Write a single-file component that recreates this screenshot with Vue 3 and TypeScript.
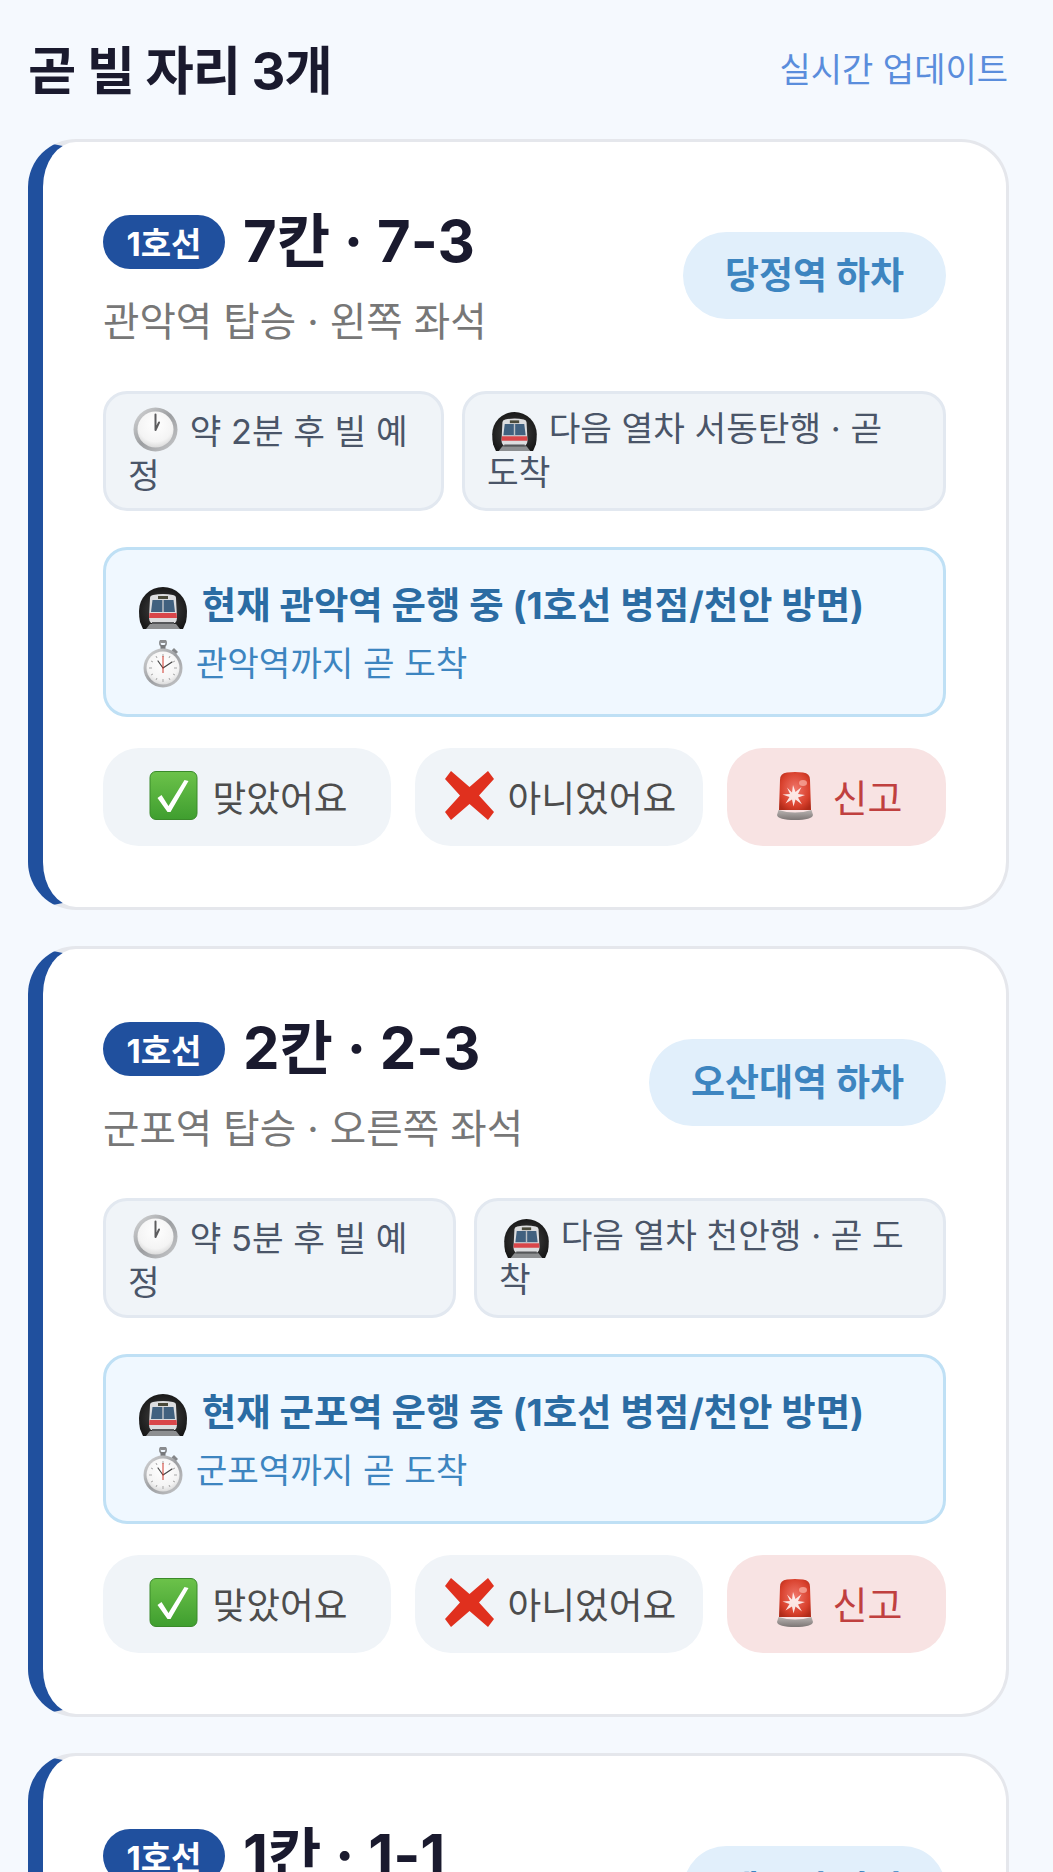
<script setup lang="ts">
interface Seat {
  car: string
  station: string
  side: string
  off: string
  wait: string
  next: string
  chipBasis: [number, number]
}

const seats: Seat[] = [
  { car: '7칸 · 7-3', station: '관악역', side: '왼쪽', off: '당정역 하차', wait: '약 2분 후 빌 예정', next: '다음 열차 서동탄행 · 곧 도착', chipBasis: [341, 484] },
  { car: '2칸 · 2-3', station: '군포역', side: '오른쪽', off: '오산대역 하차', wait: '약 5분 후 빌 예정', next: '다음 열차 천안행 · 곧 도착', chipBasis: [353, 472] },
  { car: '1칸 · 1-1', station: '금정역', side: '왼쪽', off: '세류역 하차', wait: '약 7분 후 빌 예정', next: '다음 열차 병점행 · 곧 도착', chipBasis: [353, 472] },
]
</script>

<template>
  <main class="page">
    <svg class="defs" width="0" height="0" aria-hidden="true">
      <defs>
        <linearGradient id="g-ring" x1="0" y1="0" x2="1" y2="1">
          <stop offset="0" stop-color="#d9dadb" />
          <stop offset=".5" stop-color="#9c9ea1" />
          <stop offset="1" stop-color="#c9cacc" />
        </linearGradient>
        <radialGradient id="g-face" cx=".5" cy=".35" r=".7">
          <stop offset="0" stop-color="#ffffff" />
          <stop offset=".7" stop-color="#f4f4f4" />
          <stop offset="1" stop-color="#d4d4d4" />
        </radialGradient>
        <radialGradient id="g-tunnel" cx=".5" cy=".55" r=".6">
          <stop offset="0" stop-color="#4a4a4a" />
          <stop offset="1" stop-color="#141414" />
        </radialGradient>
        <linearGradient id="g-green" x1="0" y1="0" x2="0" y2="1">
          <stop offset="0" stop-color="#6cc24a" />
          <stop offset="1" stop-color="#3f9e2f" />
        </linearGradient>
        <radialGradient id="g-siren" cx=".5" cy=".45" r=".65">
          <stop offset="0" stop-color="#f0766a" />
          <stop offset=".7" stop-color="#d8402c" />
          <stop offset="1" stop-color="#b02a18" />
        </radialGradient>
        <linearGradient id="g-base" x1="0" y1="0" x2="0" y2="1">
          <stop offset="0" stop-color="#b9b4b2" />
          <stop offset="1" stop-color="#7c7675" />
        </linearGradient>
      </defs>
      <symbol id="i-clock" viewBox="0 0 45 45">
        <circle cx="22.5" cy="22.5" r="22" fill="url(#g-ring)" />
        <circle cx="22.5" cy="22.5" r="18" fill="url(#g-face)" />
        <path d="M22.5 7.5V23L26 15.5" fill="none" stroke="#5d5d5f" stroke-width="2" stroke-linecap="round" stroke-linejoin="round" />
      </symbol>
      <symbol id="i-train" viewBox="0 0 48 42">
        <path d="M1 35Q0 30 0 24a24 24 0 0 1 48 0q0 6-1 11l-3 7H4z" fill="url(#g-tunnel)" />
        <path d="M7 42l4-5h26l4 5z" fill="#8d8f91" />
        <path d="M14 8q10-2 20 0q3 .5 3 3l1 20q0 3-2 5H12q-2-2-2-5l1-20q0-2.500 3-3z" fill="#dcdddf" />
        <path d="M13.500 13h21l1.500 12h-24z" fill="#41617f" />
        <path d="M24 13v12" stroke="#bcc1c6" stroke-width="1.500" />
        <rect x="19" y="9" width="10" height="3" fill="#4a4a3a" />
        <path d="M10.500 26h27l.5 5h-28z" fill="#d9464a" />
        <rect x="13" y="35" width="22" height="2" fill="#55575a" />
      </symbol>
      <symbol id="i-stopwatch" viewBox="0 0 40 48">
        <rect x="17" y="0" width="6" height="3" rx="1.500" fill="#8a8c8f" />
        <circle cx="20" cy="3" r="3.200" fill="none" stroke="#8a8c8f" stroke-width="1.600" />
        <rect x="17.500" y="5" width="5" height="5" fill="#77797c" />
        <path d="M31 8l4 4-2.500 2.500-4-4z" fill="#85878a" />
        <circle cx="20" cy="28" r="19.500" fill="url(#g-ring)" />
        <circle cx="20" cy="28" r="16.500" fill="url(#g-face)" />
        <path d="M20 14v3M20 39v3M6 28h3M31 28h3M13 16l1 2M27 16l-1 2M8 21l2 1M32 21l-2 1M8 35l2-1M32 35l-2-1M13 40l1-2M27 40l-1-2" stroke="#a7a7a7" stroke-width="1" />
        <path d="M20 28L29 22M20 28l-5-7" stroke="#444" stroke-width="1.200" stroke-linecap="round" />
        <path d="M20 16v17" stroke="#d0382c" stroke-width="1" />
      </symbol>
      <symbol id="i-check" viewBox="0 0 48 49">
        <rect x=".5" y=".5" width="47" height="48" rx="6" fill="url(#g-green)" stroke="#3a8a2a" />
        <path d="M8 27l4-3 7 11L35 9l4 1-18 31h-3z" fill="#fff" />
      </symbol>
      <symbol id="i-cross" viewBox="0 0 49 49">
        <path d="M0 8L6 0l18.500 16L43 0l6 8-15 16.500L49 41l-6 8-18.500-16L6 49l-6-8 15-16.500z" fill="#e0301e" />
      </symbol>
      <symbol id="i-siren" viewBox="0 0 36 48">
        <path d="M3 8q0-7 7-7.500q8-1 16 0q7 .5 7 7.500l1 30H2z" fill="url(#g-siren)" />
        <path d="M16 13l2.500 7 6-5-3.500 7 7 1-7 2.500 4 7-6.500-5-2 7-1.500-7-6.500 4 4-6.500-7-2.500 7.500-.5-3-6.500 5 5z" fill="#fff" opacity=".85" />
        <ellipse cx="26" cy="11" rx="4" ry="3" fill="#f6a79b" opacity=".8" />
        <path d="M1.500 38q16.500 5 33 0l1.500 5q-1 5-18 5T0 43z" fill="url(#g-base)" />
      </symbol>
    </svg>

    <header class="head">
      <h1 class="title">곧 빌 자리 3개</h1>
      <span class="live">실시간 업데이트</span>
    </header>

    <section class="list">
      <article v-for="seat in seats" :key="seat.car" class="card">
        <div class="top">
          <div class="top-text">
            <div class="name-row">
              <span class="line">1호선</span>
              <strong class="car">{{ seat.car }}</strong>
            </div>
            <p class="sub">{{ seat.station }} 탑승 · {{ seat.side }} 좌석</p>
          </div>
          <span class="off">{{ seat.off }}</span>
        </div>

        <div class="chips">
          <div class="chip" :style="{ flexBasis: seat.chipBasis[0] + 'px' }">
            <svg class="emo clock"><use href="#i-clock" /></svg> {{ seat.wait }}
          </div>
          <div class="chip" :style="{ flexBasis: seat.chipBasis[1] + 'px' }">
            <svg class="emo train-s"><use href="#i-train" /></svg> {{ seat.next }}
          </div>
        </div>

        <div class="info">
          <p class="info-main">
            <svg class="emo train-l"><use href="#i-train" /></svg> 현재 {{ seat.station }} 운행 중 (1호선 병점/천안 방면)
          </p>
          <p class="info-sub">
            <svg class="emo watch"><use href="#i-stopwatch" /></svg> {{ seat.station }}까지 곧 도착
          </p>
        </div>

        <div class="actions">
          <button class="act yes" type="button"><svg class="emo check"><use href="#i-check" /></svg>맞았어요</button>
          <button class="act no" type="button"><svg class="emo check"><use href="#i-cross" /></svg>아니었어요</button>
          <button class="act report" type="button"><svg class="emo siren"><use href="#i-siren" /></svg>신고</button>
        </div>
      </article>
    </section>
  </main>
</template>

<style scoped>
.page {
  height: 1872px;
  overflow: hidden;
  box-sizing: border-box;
  padding: 0 44px 0 28px;
  background: #f5f9fe;
  font-family: Inter, "Noto Sans CJK KR", sans-serif;
}
.defs {
  position: absolute;
}
.head {
  height: 139px;
  padding: 0 1px 5px 0;
  box-sizing: border-box;
  display: flex;
  justify-content: space-between;
  align-items: center;
}
.title {
  margin: 0;
  font-size: 52.5px;
  font-weight: 700;
  color: #1a1a2e;
  letter-spacing: -1px;
}
.live {
  font-size: 34px;
  color: #5a8ddc;
}
.list {
  display: flex;
  flex-direction: column;
  gap: 36px;
}
.card {
  box-sizing: border-box;
  height: 771px;
  flex: none;
  padding: 73px 60px 0;
  background: #fff;
  border: 3px solid #e5e7ec;
  border-left: 15px solid #20509e;
  border-radius: 48px;
}
.top {
  display: flex;
  justify-content: space-between;
  align-items: flex-start;
  height: 139px;
}
.name-row {
  display: flex;
  align-items: center;
  gap: 18px;
  height: 54px;
}
.line {
  width: 122px;
  height: 54px;
  border-radius: 27px;
  background: #20509e;
  color: #fff;
  font-size: 33px;
  font-weight: 700;
  display: flex;
  align-items: center;
  justify-content: center;
}
.car {
  margin-bottom: 10px;
  font-size: 58px;
  font-weight: 700;
  color: #1a1a2e;
}
.sub {
  margin: 28px 0 0;
  font-size: 39.6px;
  line-height: 50px;
  color: #777;
}
.off {
  margin-top: 17px;
  padding: 0 42px;
  height: 87px;
  line-height: 87px;
  border-radius: 44px;
  background: #e1effb;
  color: #3d85c0;
  font-size: 37px;
  font-weight: 700;
  white-space: nowrap;
}
.chips {
  display: flex;
  gap: 18px;
  margin-top: 37px;
}
.chip {
  box-sizing: border-box;
  flex: 0 0 auto;
  height: 120px;
  padding: 13px 24px 13px 22px;
  background: #f0f4f8;
  border: 3px solid #e2e8f0;
  border-radius: 24px;
  color: #4a5568;
  font-size: 34.4px;
  line-height: 44px;
}
.emo {
  display: inline-block;
}
.clock {
  width: 45px;
  height: 45px;
  margin: 0 2px 0 5px;
  vertical-align: -8px;
}
.train-s {
  width: 45px;
  height: 39px;
  margin: 0 2px 0 5px;
  vertical-align: -10px;
}
.info {
  box-sizing: border-box;
  height: 170px;
  margin-top: 36px;
  padding: 26px 33px 0;
  background: #f0f8ff;
  border: 3px solid #bfe0f5;
  border-radius: 24px;
}
.info p {
  margin: 0;
}
.info-main {
  font-size: 37.4px;
  font-weight: 700;
  line-height: 60px;
  color: #2b6ca3;
  white-space: nowrap;
}
.info-sub {
  font-size: 34.3px;
  line-height: 56px;
  color: #3d85c0;
}
.train-l {
  width: 48px;
  height: 42px;
  margin-right: 6px;
  vertical-align: -10px;
}
.watch {
  width: 40px;
  height: 48px;
  margin: 0 3px 0 4px;
  vertical-align: -12px;
}
.actions {
  display: flex;
  gap: 24px;
  margin-top: 31px;
}
.act {
  box-sizing: border-box;
  height: 98px;
  flex: 0 0 288px;
  border: 0;
  border-radius: 36px;
  background: #f0f4f8;
  color: #4d4d4d;
  font: inherit;
  font-size: 36.7px;
  display: flex;
  align-items: center;
  justify-content: center;
  gap: 14px;
  padding: 0 0 3px 3px;
}
.act.report {
  flex: 0 0 219px;
  background: #f8e3e3;
  color: #c0403f;
  font-size: 38px;
  gap: 20px;
  padding-left: 6px;
}
.check {
  width: 49px;
  height: 49px;
}
.siren {
  width: 36px;
  height: 48px;
}
</style>

<style>
html, body {
  margin: 0;
  background: #f5f9fe;
}
</style>
